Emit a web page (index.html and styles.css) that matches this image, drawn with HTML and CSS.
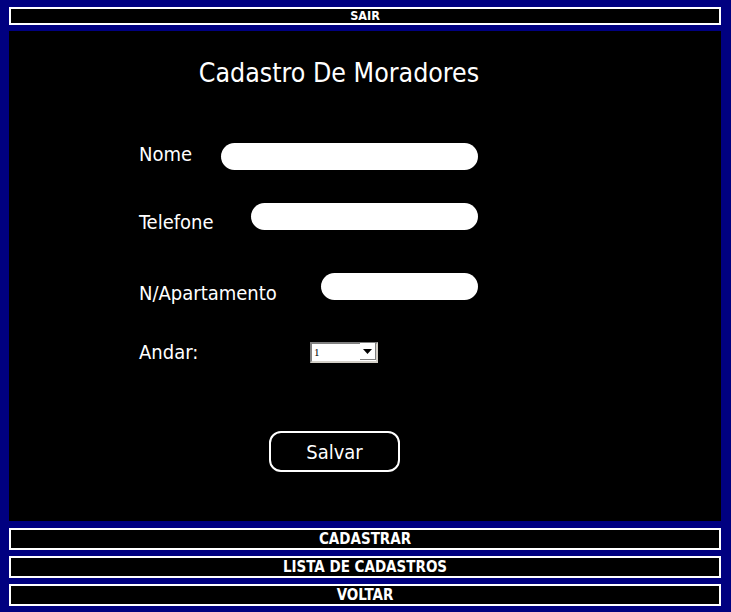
FILE: index.html
```html
<!DOCTYPE html>
<html lang="pt">
<head>
<meta charset="utf-8">
<title>Cadastro De Moradores</title>
<link rel="stylesheet" href="styles.css">
</head>
<body>
<button class="bar bar-small" type="button">SAIR</button>
<main class="panel">
  <h1 class="title">Cadastro De Moradores</h1>
  <form class="form">
    <div class="row row-nome">
      <label class="label" for="nome">Nome</label>
      <input class="field field-nome" id="nome" type="text">
    </div>
    <div class="row row-tel">
      <label class="label" for="tel">Telefone</label>
      <input class="field field-tel" id="tel" type="text">
    </div>
    <div class="row row-ap">
      <label class="label" for="ap">N/Apartamento</label>
      <input class="field field-ap" id="ap" type="text">
    </div>
    <div class="row row-andar">
      <label class="label" for="andar">Andar:</label>
      <div class="select-wrap">
        <select class="select" id="andar">
          <option>1</option>
          <option>2</option>
          <option>3</option>
        </select>
        <span class="select-btn"><svg width="9" height="5" viewBox="0 0 9 5"><path d="M0 0H9L4.5 5Z" fill="#000"/></svg></span>
      </div>
    </div>
    <div class="save-row">
      <button class="save" type="button">Salvar</button>
    </div>
  </form>
</main>
<button class="bar" type="button">CADASTRAR</button>
<button class="bar" type="button">LISTA DE CADASTROS</button>
<button class="bar" type="button">VOLTAR</button>
</body>
</html>
```

FILE: styles.css
```css
html, body {
  margin: 0;
  height: 100%;
}
body {
  background: #000080;
  padding: 7px 10px 0 9px;
  box-sizing: border-box;
  display: flex;
  flex-direction: column;
  gap: 6px;
  font-family: "DejaVu Sans Condensed", "DejaVu Sans", sans-serif;
}
.bar {
  display: block;
  width: 100%;
  height: 22px;
  margin: 0;
  padding: 0;
  background: #000;
  color: #fff;
  border: 2px solid #fff;
  font-family: "DejaVu Sans Condensed", "DejaVu Sans", sans-serif;
  font-weight: bold;
  font-size: 15px;
  line-height: 18px;
  text-align: center;
  flex: none;
}
.bar-small {
  height: 18px;
  font-size: 12.5px;
  line-height: 14px;
}
.panel {
  background: #000;
  height: 490px;
  flex: none;
  color: #fff;
  box-sizing: border-box;
  padding: 0 0 0 130px;
  margin-bottom: 1px;
}
.title {
  margin: 0;
  padding-top: 26px;
  width: 400px;
  text-align: center;
  font-weight: normal;
  font-size: 26.5px;
  line-height: 32px;
}
.form {
  width: 339px;
}
.row {
  display: flex;
  justify-content: space-between;
  align-items: flex-start;
}
.label {
  font-size: 20px;
  line-height: 22px;
}
.field {
  height: 27px;
  border: none;
  border-radius: 14px;
  background: #fff;
  padding: 0 12px;
  box-sizing: border-box;
  margin: 0;
}
.row-nome { margin-top: 54px; }
.row-nome .label { padding-top: 0; }
.field-nome { width: 257px; }
.row-tel { margin-top: 33px; }
.row-tel .label { padding-top: 8px; }
.field-tel { width: 227px; }
.row-ap { margin-top: 40px; }
.row-ap .label { padding-top: 9px; }
.field-ap { width: 157px; }
.row-andar {
  margin-top: 37px;
  justify-content: flex-start;
}
.row-andar .label { padding-top: 0; width: 171px; }
.select-wrap {
  position: relative;
  width: 68px;
  height: 21px;
}
.select {
  appearance: none;
  -webkit-appearance: none;
  width: 68px;
  height: 21px;
  margin: 0;
  border: 2px solid;
  border-color: #808080 #d4d0c8 #d4d0c8 #808080;
  background: #fff;
  color: #000;
  font-family: "Liberation Serif", serif;
  font-size: 11px;
  padding: 0 0 0 2px;
  border-radius: 0;
}
.select-btn {
  position: absolute;
  right: 2px;
  top: 2px;
  width: 16px;
  height: 17px;
  background: #fff;
  border-right: 1px solid #808080;
  border-bottom: 1px solid #808080;
  box-sizing: border-box;
  display: flex;
  align-items: center;
  justify-content: center;
  pointer-events: none;
}
.save-row {
  margin-top: 68px;
}
.save {
  width: 131px;
  height: 41px;
  background: #000;
  color: #fff;
  border: 2px solid #fff;
  border-radius: 12px;
  font-family: "DejaVu Sans Condensed", "DejaVu Sans", sans-serif;
  font-size: 20px;
  padding-top: 2px;
  margin-left: 130px;
}
```
